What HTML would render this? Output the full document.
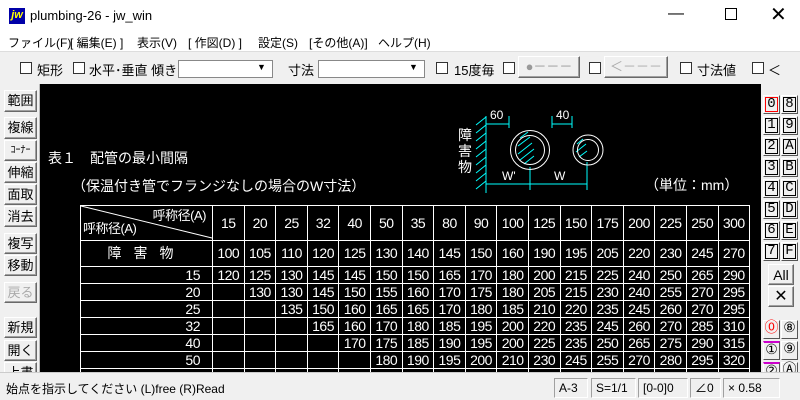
<!DOCTYPE html><html><head><meta charset="utf-8"><style>
*{margin:0;padding:0;box-sizing:border-box}
body{width:800px;height:400px;overflow:hidden;background:#f0f0f0;font-family:"Liberation Sans","Noto Sans CJK JP",sans-serif;position:relative;font-size:12px;color:#000}
.a{position:absolute}
.btn{position:absolute;background:#f0f0f0;border:1px solid;border-color:#fff #696969 #696969 #fff;box-shadow:inset -1px -1px 0 #a0a0a0;font-size:13px;text-align:center;line-height:20px}
.cb{position:absolute;width:12px;height:12px;border:1px solid #333;background:#fff;top:62px}
.lb{position:absolute;width:17px;height:19px;background:#f0f0f0;border:1px solid;border-color:#fff #555 #555 #fff;font-family:"Liberation Mono",monospace;font-size:14px;text-align:center;line-height:16px}
.lb span{display:inline-block;border:1px solid #000;width:13px;height:15px;line-height:13px;margin-top:1px}
.sb{position:absolute;top:378px;height:20px;border:1px solid;border-color:#a0a0a0 #fff #fff #a0a0a0;font-size:12px;line-height:18px;padding-left:4px}
table{position:absolute;left:80px;top:205px;border-collapse:collapse;color:#fff;font-size:14px}
td{border:1.5px solid #fff;width:31.6px;text-align:center;height:17px;line-height:15px;padding:0;font-family:"Liberation Sans Narrow","Liberation Sans",sans-serif;letter-spacing:-0.5px}
td.f{width:132px;text-align:right;padding-right:12px}
</style></head><body>
<div class="a" style="left:0;top:0;width:800px;height:31px;background:#fff"></div>
<div class="a" style="left:9px;top:8px;width:16px;height:16px;background:#0000a8;color:#ff0;font-size:11px;font-weight:bold;font-style:italic;line-height:15px;text-align:center">jw</div>
<div class="a" style="left:30px;top:8px;font-size:13px">plumbing-26 - jw_win</div>
<div class="a" style="left:668px;top:5px;font-size:16px">—</div>
<div class="a" style="left:725px;top:8px;width:12px;height:12px;border:1px solid #000"></div>
<div class="a" style="left:770px;top:2px;font-size:20px">✕</div>
<div class="a" style="left:0;top:31px;width:800px;height:20px;background:#fff"></div>
<div class="a" style="left:8px;top:34px">ファイル(F)</div>
<div class="a" style="left:70px;top:34px">[ 編集(E) ]</div>
<div class="a" style="left:137px;top:34px">表示(V)</div>
<div class="a" style="left:188px;top:34px">[ 作図(D) ]</div>
<div class="a" style="left:258px;top:34px">設定(S)</div>
<div class="a" style="left:309px;top:34px">[その他(A)]</div>
<div class="a" style="left:378px;top:34px">ヘルプ(H)</div>
<div class="a" style="left:0;top:51px;width:800px;height:1px;background:#ddd"></div>
<div class="cb" style="left:20px"></div><div class="a" style="left:37px;top:60px;font-size:13px">矩形</div>
<div class="cb" style="left:73px"></div><div class="a" style="left:89px;top:60px;font-size:13px">水平･垂直 傾き</div>
<div class="a" style="left:178px;top:60px;width:95px;height:18px;background:#fff;border:1px solid #888"></div>
<div class="a" style="left:257px;top:62px;font-size:9px">▼</div>
<div class="a" style="left:288px;top:60px;font-size:13px">寸法</div>
<div class="a" style="left:318px;top:60px;width:107px;height:18px;background:#fff;border:1px solid #888"></div>
<div class="a" style="left:409px;top:62px;font-size:9px">▼</div>
<div class="cb" style="left:436px"></div><div class="a" style="left:454px;top:60px;font-size:13px">15度毎</div>
<div class="cb" style="left:503px"></div>
<div class="btn" style="left:518px;top:56px;width:62px;height:22px;color:#999;line-height:20px">●－－－</div>
<div class="cb" style="left:589px"></div>
<div class="btn" style="left:604px;top:56px;width:64px;height:22px;color:#aaa">＜－－－</div>
<div class="cb" style="left:680px"></div><div class="a" style="left:697px;top:60px;font-size:13px">寸法値</div>
<div class="cb" style="left:752px"></div><div class="a" style="left:768px;top:60px;font-size:13px">＜</div>
<div class="a" style="left:40px;top:84px;width:721px;height:288px;background:#000"></div>
<div class="a" style="left:0;top:84px;width:40px;height:290px;background:#f0f0f0;border-right:1px solid #bbb"></div>
<div class="btn" style="left:4px;top:90px;width:33px;height:22px">範囲</div>
<div class="btn" style="left:4px;top:117px;width:33px;height:22px">複線</div>
<div class="btn" style="left:4px;top:140px;width:33px;height:21px;font-size:10px">ｺｰﾅｰ</div>
<div class="btn" style="left:4px;top:162px;width:33px;height:21px">伸縮</div>
<div class="btn" style="left:4px;top:184px;width:33px;height:21px">面取</div>
<div class="btn" style="left:4px;top:206px;width:33px;height:21px">消去</div>
<div class="btn" style="left:4px;top:233px;width:33px;height:21px">複写</div>
<div class="btn" style="left:4px;top:255px;width:33px;height:21px">移動</div>
<div class="btn" style="left:4px;top:282px;width:33px;height:21px;color:#aaa">戻る</div>
<div class="btn" style="left:4px;top:317px;width:33px;height:21px">新規</div>
<div class="btn" style="left:4px;top:340px;width:33px;height:21px">開く</div>
<div class="btn" style="left:4px;top:362px;width:33px;height:21px">上書</div>
<div class="a" style="left:48px;top:148px;color:#fff;font-size:14px">表１　配管の最小間隔</div>
<div class="a" style="left:72px;top:176px;color:#fff;font-size:14px">（保温付き管でフランジなしの場合のW寸法）</div>
<div class="a" style="left:645px;top:175px;color:#fff;font-size:14px">（単位：mm）</div>
<svg class="a" style="left:0;top:0" width="800" height="400">
<g stroke="#0ff" stroke-width="1" fill="none">
<line x1="486" y1="117" x2="486" y2="193"/>
<path d="M476 125l10-8M476 133l10-8M476 141l10-8M476 149l10-8M476 157l10-8M476 165l10-8M476 173l10-8M476 181l10-8M476 189l10-8"/>
<line x1="486" y1="124" x2="509" y2="124"/><line x1="509" y1="116" x2="509" y2="128"/><line x1="486" y1="116" x2="486" y2="128"/>
<line x1="552" y1="124" x2="572" y2="124"/><line x1="552" y1="116" x2="552" y2="128"/><line x1="572" y1="116" x2="572" y2="128"/>
<line x1="486" y1="184" x2="587" y2="184"/><line x1="530" y1="167" x2="530" y2="190"/><line x1="587" y1="162" x2="587" y2="190"/>
<path d="M520 138l8-6M518 146l12-9M518 154l14-11M520 160l14-11M524 164l10-8M577 144l6-5M576 152l10-8M579 157l8-6" />
</g>
<g stroke="#fff" fill="none"><circle cx="530" cy="150" r="19.5"/><circle cx="530" cy="150" r="14.5"/><circle cx="588" cy="150" r="15"/><circle cx="588" cy="150" r="10.5"/></g>
<g fill="#fff" font-size="12" font-family="Liberation Sans"><text x="490" y="119">60</text><text x="556" y="119">40</text><text x="502" y="180">W'</text><text x="554" y="180">W</text></g>
<g fill="#fff" font-size="14" font-family="Noto Sans CJK JP"><text x="458" y="140">障</text><text x="458" y="156">害</text><text x="458" y="172">物</text></g>
<line x1="81" y1="206" x2="212" y2="238" stroke="#fff"/>
</svg>
<table>
<tr style="height:35px"><td class="f" style="position:relative;height:35px;font-size:13px"><span style="position:absolute;right:6px;top:2px">呼称径(A)</span><span style="position:absolute;left:2px;bottom:4px">呼称径(A)</span></td><td>15</td><td>20</td><td>25</td><td>32</td><td>40</td><td>50</td><td>35</td><td>80</td><td>90</td><td>100</td><td>125</td><td>150</td><td>175</td><td>200</td><td>225</td><td>250</td><td>300</td></tr>
<tr style="height:26px"><td class="f" style="text-align:center;padding:0;letter-spacing:12px">障害物</td><td>100</td><td>105</td><td>110</td><td>120</td><td>125</td><td>130</td><td>140</td><td>145</td><td>150</td><td>160</td><td>190</td><td>195</td><td>205</td><td>220</td><td>230</td><td>245</td><td>270</td></tr>
<tr><td class="f">15</td><td>120</td><td>125</td><td>130</td><td>145</td><td>145</td><td>150</td><td>150</td><td>165</td><td>170</td><td>180</td><td>200</td><td>215</td><td>225</td><td>240</td><td>250</td><td>265</td><td>290</td></tr>
<tr><td class="f">20</td><td></td><td>130</td><td>130</td><td>145</td><td>150</td><td>155</td><td>160</td><td>170</td><td>175</td><td>180</td><td>205</td><td>215</td><td>230</td><td>240</td><td>255</td><td>270</td><td>295</td></tr>
<tr><td class="f">25</td><td></td><td></td><td>135</td><td>150</td><td>160</td><td>165</td><td>165</td><td>170</td><td>180</td><td>185</td><td>210</td><td>220</td><td>235</td><td>245</td><td>260</td><td>270</td><td>295</td></tr>
<tr><td class="f">32</td><td></td><td></td><td></td><td>165</td><td>160</td><td>170</td><td>180</td><td>185</td><td>195</td><td>200</td><td>220</td><td>235</td><td>245</td><td>260</td><td>270</td><td>285</td><td>310</td></tr>
<tr><td class="f">40</td><td></td><td></td><td></td><td></td><td>170</td><td>175</td><td>185</td><td>190</td><td>195</td><td>200</td><td>225</td><td>235</td><td>250</td><td>265</td><td>275</td><td>290</td><td>315</td></tr>
<tr><td class="f">50</td><td></td><td></td><td></td><td></td><td></td><td>180</td><td>190</td><td>195</td><td>200</td><td>210</td><td>230</td><td>245</td><td>255</td><td>270</td><td>280</td><td>295</td><td>320</td></tr>
<tr><td class="f">65</td><td></td><td></td><td></td><td></td><td></td><td></td><td>195</td><td>205</td><td>210</td><td>215</td><td>240</td><td>250</td><td>265</td><td>275</td><td>290</td><td>300</td><td>330</td></tr>
</table>
<div class="a" style="left:761px;top:84px;width:39px;height:290px;background:#f0f0f0"></div>
<div class="lb" style="left:763px;top:95px"><span style="border-color:red">0</span></div><div class="lb" style="left:781px;top:95px"><span>8</span></div>
<div class="lb" style="left:763px;top:116px"><span>1</span></div><div class="lb" style="left:781px;top:116px"><span>9</span></div>
<div class="lb" style="left:763px;top:137px"><span>2</span></div><div class="lb" style="left:781px;top:137px"><span>A</span></div>
<div class="lb" style="left:763px;top:158px"><span>3</span></div><div class="lb" style="left:781px;top:158px"><span>B</span></div>
<div class="lb" style="left:763px;top:179px"><span>4</span></div><div class="lb" style="left:781px;top:179px"><span>C</span></div>
<div class="lb" style="left:763px;top:200px"><span>5</span></div><div class="lb" style="left:781px;top:200px"><span>D</span></div>
<div class="lb" style="left:763px;top:221px"><span>6</span></div><div class="lb" style="left:781px;top:221px"><span>E</span></div>
<div class="lb" style="left:763px;top:242px"><span>7</span></div><div class="lb" style="left:781px;top:242px"><span>F</span></div>
<div class="btn" style="left:768px;top:264px;width:26px;height:21px;font-size:14px">All</div>
<div class="btn" style="left:768px;top:286px;width:26px;height:21px;font-size:16px">✕</div>
<div class="lb" style="left:763px;top:320px;color:red">⓪</div><div class="lb" style="left:781px;top:320px">⑧</div>
<div class="lb" style="left:763px;top:341px;border-top:2px solid #c0c">①</div><div class="lb" style="left:781px;top:341px">⑨</div>
<div class="lb" style="left:763px;top:362px;border-top:2px solid #c0c">②</div><div class="lb" style="left:781px;top:362px">Ⓐ</div>
<div class="a" style="left:0;top:372px;width:800px;height:28px;background:#f0f0f0;border-top:1px solid #ccc"></div>
<div class="a" style="left:6px;top:380px;font-size:12px">始点を指示してください (L)free (R)Read</div>
<div class="sb" style="left:554px;width:34px">A-3</div>
<div class="sb" style="left:591px;width:45px">S=1/1</div>
<div class="sb" style="left:638px;width:50px">[0-0]0</div>
<div class="sb" style="left:690px;width:31px">∠0</div>
<div class="sb" style="left:723px;width:57px">× 0.58</div>
</body></html>
